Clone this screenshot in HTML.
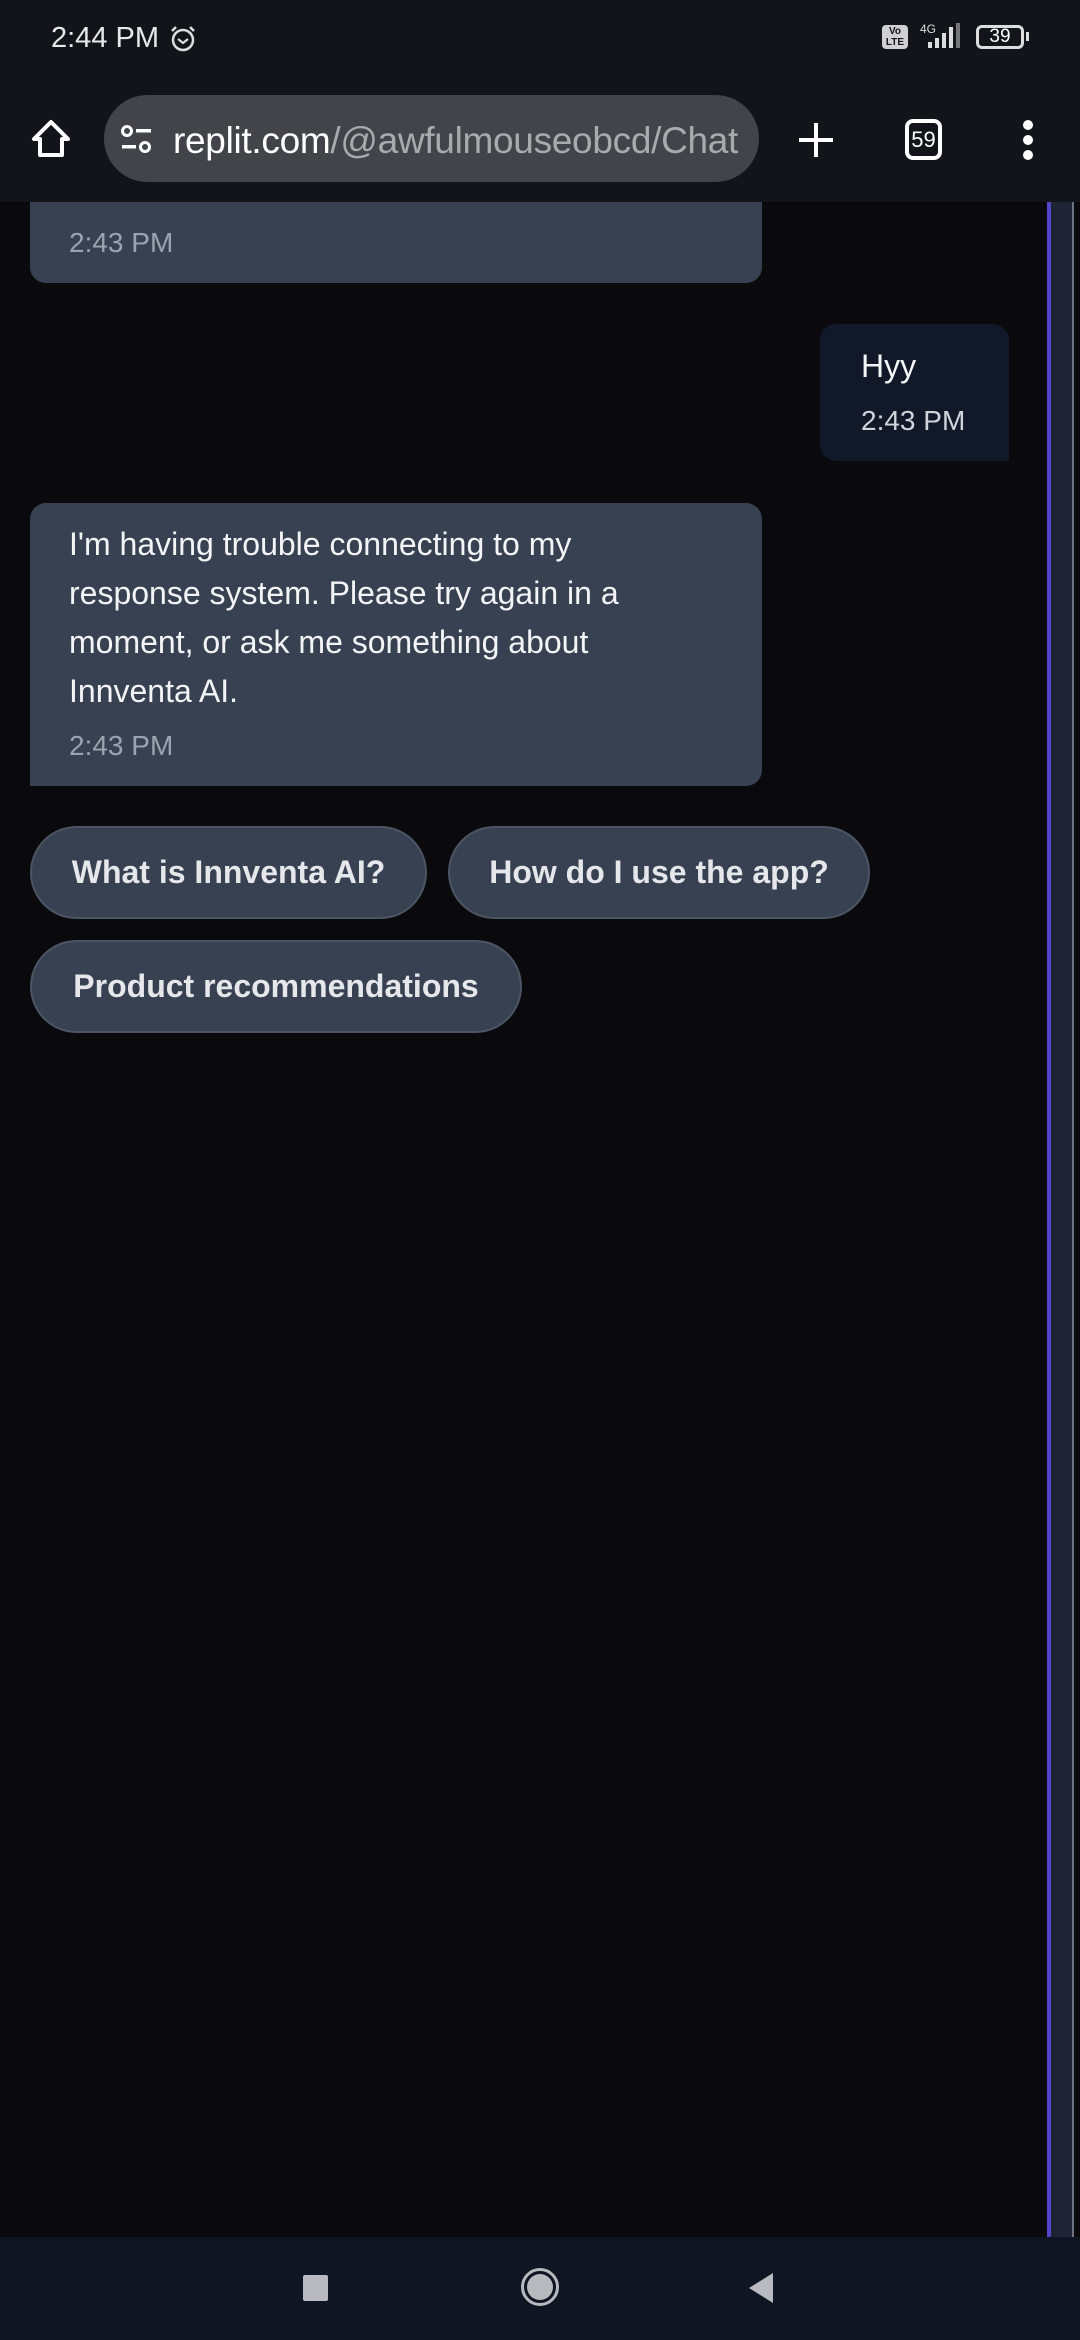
<!DOCTYPE html>
<html><head><meta charset="utf-8"><style>
*{margin:0;padding:0;box-sizing:border-box}
body{width:1080px;height:2340px;background:#0a0a0c;position:relative;overflow:hidden;font-family:"Liberation Sans",sans-serif;}
.abs{position:absolute}
.top{left:0;top:0;width:1080px;height:202px;background:#131419}
.pill{left:104px;top:95px;width:655px;height:87px;border-radius:44px;background:#434449}
.url{left:173px;top:120px;font-size:37px;color:#fff;white-space:nowrap;letter-spacing:-0.3px}
.url span{color:#a9aaae}
.bub{background:#374151;border-radius:16px}
.ts{font-size:28px;color:#9ca3af}
.msg{font-size:32px;color:#f3f4f6;line-height:49px}
.chip{background:#374151;border:2px solid #4b5563;border-radius:47px;color:#e5e7eb;font-size:32px;font-weight:bold;display:flex;align-items:center;justify-content:center;height:93px}
</style></head><body>
<div class="abs bub" style="left:30px;top:150px;width:732px;height:133px;border-radius:0 0 16px 16px"></div>
<div class="abs ts" style="left:69px;top:227px">2:43 PM</div>

<div class="abs top"></div>
<div class="abs" style="left:51px;top:22px;font-size:29px;color:#e8e8ea">2:44 PM</div>
<svg class="abs" style="left:168px;top:24px" width="30" height="30" viewBox="0 0 30 30"><circle cx="15" cy="16" r="10" fill="none" stroke="#ddd" stroke-width="2.5"/><path d="M10 15l5 4 5-4" fill="none" stroke="#ddd" stroke-width="2.2"/><path d="M4 7l4-4M26 7l-4-4" stroke="#ddd" stroke-width="2.5"/></svg>
<div class="abs" style="left:882px;top:25px;width:26px;height:24px;background:#d0d0d2;border-radius:4px;font-size:10px;line-height:11px;color:#131419;font-weight:bold;text-align:center;padding-top:1px">Vo<br>LTE</div>
<div class="abs" style="left:920px;top:22px;font-size:12px;color:#ddd">4G</div>
<svg class="abs" style="left:918px;top:22px" width="45" height="28"><rect x="10" y="20" width="4" height="6" fill="#ddd"/><rect x="17" y="16" width="4" height="10" fill="#ddd"/><rect x="24" y="11" width="4" height="15" fill="#ddd"/><rect x="31" y="5" width="4" height="21" fill="#ddd"/><rect x="38" y="1" width="4" height="25" fill="#777"/></svg>
<div class="abs" style="left:976px;top:25px;width:48px;height:24px;border:3px solid #ddd;border-radius:6px;font-size:19px;color:#fff;text-align:center;line-height:18px">39</div>
<div class="abs" style="left:1026px;top:32px;width:3px;height:9px;background:#ddd"></div>

<svg class="abs" style="left:30px;top:118px" width="42" height="42" viewBox="0 0 42 42"><path d="M21 4L4 21h6v16h22V21h6z" fill="none" stroke="#fff" stroke-width="4" stroke-linejoin="round"/></svg>
<div class="abs pill"></div>
<svg class="abs" style="left:120px;top:124px" width="36" height="32"><circle cx="7" cy="7" r="4.5" fill="none" stroke="#fff" stroke-width="3"/><rect x="16" y="5" width="15" height="3.5" fill="#fff"/><circle cx="25" cy="23" r="4.5" fill="none" stroke="#fff" stroke-width="3"/><rect x="2" y="21" width="14" height="3.5" fill="#fff"/></svg>
<div class="abs url">replit.com<span>/@awfulmouseobcd/Chat</span></div>
<svg class="abs" style="left:797px;top:121px" width="38" height="38"><path d="M19 2v34M2 19h34" stroke="#fff" stroke-width="4"/></svg>
<div class="abs" style="left:905px;top:119px;width:37px;height:41px;border:4px solid #fff;border-radius:8px;color:#fff;font-size:22px;text-align:center;line-height:33px">59</div>
<svg class="abs" style="left:1019px;top:119px" width="18" height="42"><circle cx="9" cy="6" r="5" fill="#fff"/><circle cx="9" cy="21" r="5" fill="#fff"/><circle cx="9" cy="36" r="5" fill="#fff"/></svg>

<div class="abs" style="left:1047px;top:202px;width:4px;height:2035px;background:#4f46c8"></div>
<div class="abs" style="left:1051px;top:202px;width:21px;height:2035px;background:#1e2433"></div>
<div class="abs" style="left:1072px;top:202px;width:2px;height:2035px;background:#6b7280"></div>

<div class="abs bub" style="left:820px;top:324px;width:189px;height:137px;background:#111827;border-radius:16px 16px 0 16px"></div>
<div class="abs" style="left:861px;top:348px;font-size:32px;color:#f3f4f6">Hyy</div>
<div class="abs ts" style="left:861px;top:405px;color:#d1d5db">2:43 PM</div>

<div class="abs bub" style="left:30px;top:503px;width:732px;height:283px;border-radius:16px 16px 16px 0"></div>
<div class="abs msg" style="left:69px;top:520px;width:605px">I'm having trouble connecting to my response system. Please try again in a moment, or ask me something about Innventa AI.</div>
<div class="abs ts" style="left:69px;top:730px">2:43 PM</div>

<div class="abs chip" style="left:30px;top:826px;width:397px">What is Innventa AI?</div>
<div class="abs chip" style="left:448px;top:826px;width:422px">How do I use the app?</div>
<div class="abs chip" style="left:30px;top:940px;width:492px">Product recommendations</div>

<div class="abs" style="left:0;top:2237px;width:1080px;height:103px;background:#0f1522"></div>
<div class="abs" style="left:303px;top:2275px;width:25px;height:26px;background:#b9babf;border-radius:2px"></div>
<div class="abs" style="left:521px;top:2268px;width:38px;height:38px;border:3px solid #b9babf;border-radius:50%"></div>
<div class="abs" style="left:527px;top:2274px;width:26px;height:26px;background:#b9babf;border-radius:50%"></div>
<svg class="abs" style="left:747px;top:2271px" width="28" height="34"><path d="M26 2v30L2 17z" fill="#b9babf"/></svg>
</body></html>
